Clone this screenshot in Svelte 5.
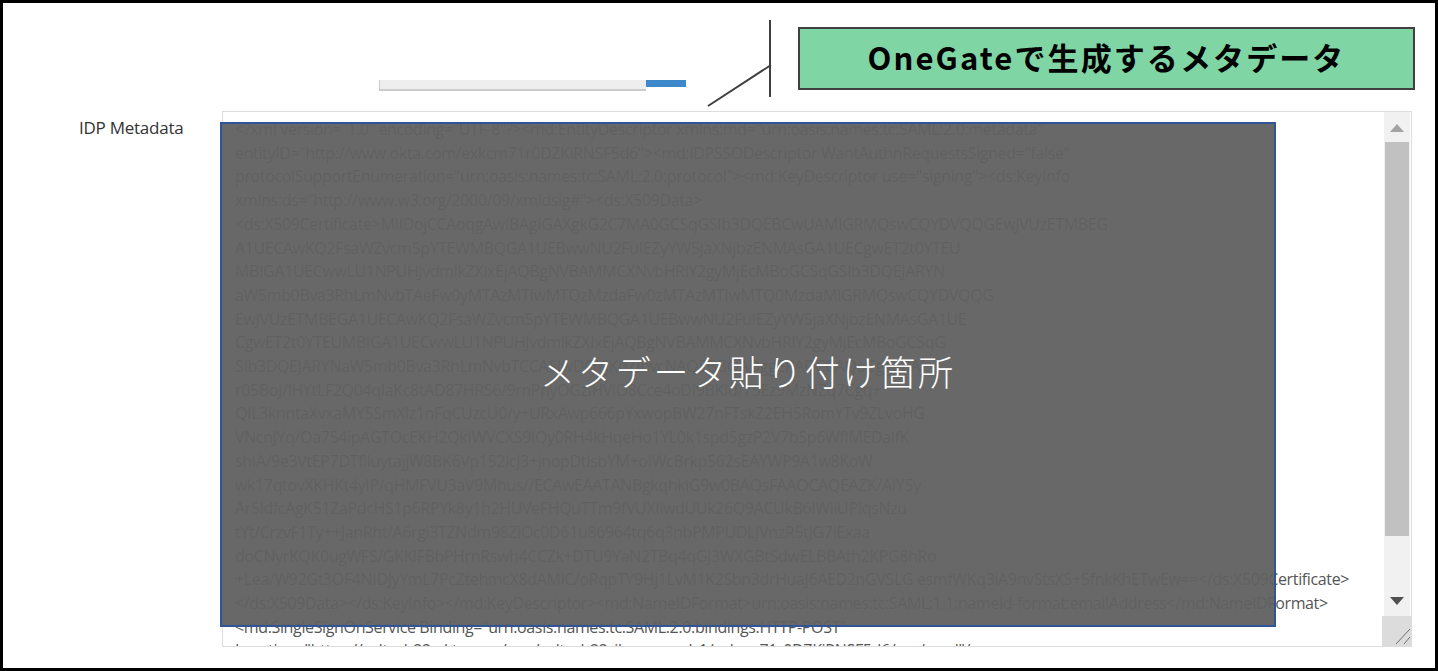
<script>
  const lines = [
    '<?xml version="1.0" encoding="UTF-8"?><md:EntityDescriptor xmlns:md="urn:oasis:names:tc:SAML:2.0:metadata"',
    'entityID="http://www.okta.com/exkcm71r0DZKiRNSF5d6"><md:IDPSSODescriptor WantAuthnRequestsSigned="false"',
    'protocolSupportEnumeration="urn:oasis:names:tc:SAML:2.0:protocol"><md:KeyDescriptor use="signing"><ds:KeyInfo',
    'xmlns:ds="http://www.w3.org/2000/09/xmldsig#"><ds:X509Data>',
    '<ds:X509Certificate>MIIDojCCAoqgAwIBAgIGAXgkG2C7MA0GCSqGSIb3DQEBCwUAMIGRMQswCQYDVQQGEwJVUzETMBEG',
    'A1UECAwKQ2FsaWZvcm5pYTEWMBQGA1UEBwwNU2FuIEZyYW5jaXNjbzENMAsGA1UECgwET2t0YTEU',
    'MBIGA1UECwwLU1NPUHJvdmlkZXIxEjAQBgNVBAMMCXNvbHRlY2gyMjEcMBoGCSqGSIb3DQEJARYN',
    'aW5mb0Bva3RhLmNvbTAeFw0yMTAzMTIwMTQzMzdaFw0zMTAzMTIwMTQ0MzdaMIGRMQswCQYDVQQG',
    'EwJVUzETMBEGA1UECAwKQ2FsaWZvcm5pYTEWMBQGA1UEBwwNU2FuIEZyYW5jaXNjbzENMAsGA1UE',
    'CgwET2t0YTEUMBIGA1UECwwLU1NPUHJvdmlkZXIxEjAQBgNVBAMMCXNvbHRlY2gyMjEcMBoGCSqG',
    'SIb3DQEJARYNaW5mb0Bva3RhLmNvbTCCASIwDQYJKoZIhvcNAQEBBQADggEPADCCAQoCggEBAJ',
    'r05BoJ/IHYtLF2Q04qIaKc8tAD87HRS6/9rnPnyOGziHVlO8Cce4oDI9BKId/75Ez9MzNZq7Cgq+',
    'QIL3knntaXvxaMY5SmXlz1nFqCUzcU0/y+URxAwp666pYxwopBW27nFTskZ2EH5RomYTv9ZLvoHG',
    'VNcnJYq/Oa754ipAGTOcEKH2QkIWVCXS9IQy0RH4kHqeHo1YL0k1spd5gzP2V7bSp6WfIMEDalfK',
    'shIA/9e3VtEP7DTflluytajjW8BK6Vp152lcJ3+jnopDtIsbYM+oIWcBrkp562sEAYWP9A1w8KoW',
    'wk17qtovXKHKt4yIP/qHMFVU3aV9Mhus//ECAwEAATANBgkqhkiG9w0BAQsFAAOCAQEAZK/AIY5y',
    'Ar5ldfcAgK51ZaPdcHS1p6RPYk8y1h2HUVeFHQuTTm9fVUXIiwdUUk26Q9ACUkB6IWiiUPIqsNzu',
    'tYt/CrzvF1Ty++JanRht/A6rgi3TZNdm98ZiOc0D61u86964tq6q3nbPMPUDLJVnzR5tJG7iExaa',
    'doCNyrKQK0ugWFS/GKKlFBbPHrnRswh4CCZk+DTU9YaN2TBq4qGJ3WXGBtSdwELBBAth2KPG8hRo',
    '+Lea/W92Gt3OF4NIDJyYmL7PcZtehmcX8dAMlC/oRqpTY9Hj1LvM1K2Sbn3drHuaJ6AED2nGVSLG esmfWKq3iA9nvStsXS+5fnkKhETwEw==</ds:X509Certificate>',
    '</ds:X509Data></ds:KeyInfo></md:KeyDescriptor><md:NameIDFormat>urn:oasis:names:tc:SAML:1.1:nameid-format:emailAddress</md:NameIDFormat>',
    '<md:SingleSignOnService Binding="urn:oasis:names:tc:SAML:2.0:bindings:HTTP-POST"',
    'Location="https://soltech22.okta.com/app/soltech22_ikomasaml_1/exkcm71r0DZKiRNSF5d6/sso/saml"/>'
  ];
</script>

<div class="frame">
  <div class="toolbar">
    <div class="input-stub"></div>
    <div class="button-stub"></div>
  </div>

  <div class="row">
    <div class="label">IDP Metadata</div>
    <div class="textarea">
      <div class="content">
        {#each lines as line}
          <div class="line">{line}</div>
        {/each}
      </div>
      <div class="scrollbar">
        <svg class="arrow" width="16" height="10" viewBox="0 0 16 10"><path d="M8 1 L15 9 H1 Z" fill="#a3a3a3" /></svg>
        <div class="thumb"></div>
        <svg class="arrow down" width="16" height="10" viewBox="0 0 16 10"><path d="M1 1 H15 L8 9 Z" fill="#505050" /></svg>
      </div>
      <div class="resizer">
        <svg width="29" height="29" viewBox="0 0 29 29"><path d="M14 28 L28 13 M22 28 L28 21" stroke="#6f6f6f" stroke-width="1" fill="none" /></svg>
      </div>
    </div>
  </div>

  <svg class="callout-lines" width="100" height="100" viewBox="0 0 100 100">
    <path d="M63 0 V77" stroke="#404040" stroke-width="2" fill="none" />
    <path d="M1 86 L64 45" stroke="#404040" stroke-width="2" fill="none" />
  </svg>
  <div class="callout">OneGateで生成するメタデータ</div>
  <div class="overlay"><span>メタデータ貼り付け箇所</span></div>
</div>

<style>
  :global(body) {
    margin: 0;
    background: #fff;
  }
  .frame {
    position: relative;
    box-sizing: border-box;
    width: 1438px;
    height: 671px;
    border: 3px solid #000;
    overflow: hidden;
    background: #fff;
    font-family: "Open Sans", "Noto Sans CJK JP", sans-serif;
  }
  .toolbar {
    display: flex;
    align-items: flex-start;
    height: 108px;
    box-sizing: border-box;
    padding: 77px 0 0 376px;
  }
  .input-stub {
    box-sizing: border-box;
    width: 267px;
    height: 11px;
    background: #eee;
    border-left: 1px solid #ccc;
    border-bottom: 2px solid #ccc;
  }
  .button-stub {
    width: 40px;
    height: 7px;
    background: #3d87cb;
  }
  .row {
    display: flex;
    align-items: flex-start;
  }
  .label {
    width: 219px;
    box-sizing: border-box;
    padding: 6px 0 0 76px;
    font-size: 17px;
    line-height: 21px;
    color: #333;
    letter-spacing: -0.25px;
  }
  .textarea {
    position: relative;
    box-sizing: border-box;
    width: 1190px;
    height: 536px;
    border: 1px solid #ddd;
    overflow: hidden;
    display: flex;
  }
  .content {
    flex: 1;
    min-width: 0;
    padding: 6px 0 0 12px;
    font-size: 16px;
    line-height: 23.7px;
    color: #555;
    letter-spacing: -0.36px;
  }
  .line {
    white-space: nowrap;
  }
  .scrollbar {
    width: 26px;
    background: #f1f1f1;
    display: flex;
    flex-direction: column;
    align-items: center;
    height: 505px;
    flex: none;
    margin-right: 1px;
  }
  .arrow {
    flex: none;
    margin-top: 11px;
  }
  .arrow.down {
    margin-top: 60px;
  }
  .thumb {
    flex: none;
    width: 24px;
    height: 394px;
    margin-top: 9px;
    background: #c1c1c1;
  }
  .resizer {
    position: absolute;
    right: 0;
    bottom: 0;
    width: 29px;
    height: 30px;
    background: #dcdcdc;
  }
  .resizer svg {
    display: block;
  }
  .callout-lines {
    position: absolute;
    left: 704px;
    top: 17px;
  }
  .callout {
    position: absolute;
    left: 795px;
    top: 24px;
    box-sizing: border-box;
    width: 617px;
    height: 63px;
    padding-bottom: 4px;
    border: 2px solid #404040;
    background: #7fd6a4;
    color: #000;
    font-family: "Noto Sans CJK JP", sans-serif;
    font-weight: 700;
    font-size: 31px;
    letter-spacing: 2.1px;
    display: flex;
    align-items: center;
    justify-content: center;
  }
  .overlay {
    position: absolute;
    left: 217px;
    top: 119px;
    box-sizing: border-box;
    width: 1056px;
    height: 505px;
    padding-bottom: 8px;
    border: 2px solid #2f5597;
    background: rgba(97, 97, 97, 0.955);
    display: flex;
    align-items: center;
    justify-content: center;
    color: #fff;
    font-family: "Noto Sans CJK JP", sans-serif;
    font-weight: 300;
    font-size: 35px;
    letter-spacing: 2.8px;
  }
</style>
